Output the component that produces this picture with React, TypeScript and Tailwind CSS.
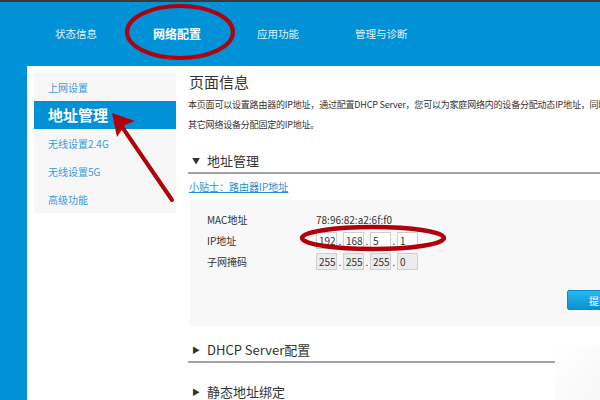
import React from "react";

const navItems = [
  { label: "状态信息", w: "w-[98px]", active: false },
  { label: "网络配置", w: "w-[104px]", active: true },
  { label: "应用功能", w: "w-[98px]", active: false },
  { label: "管理与诊断", w: "w-[98px]", active: false },
];

const sideItems = ["上网设置", "地址管理", "无线设置2.4G", "无线设置5G", "高级功能"];

function IpBoxes({ parts, disabled }: { parts: string[]; disabled?: boolean }) {
  return (
    <div className="flex items-center">
      {parts.map((p, i) => (
        <div key={i} className="flex items-center">
          {i > 0 && <span className="w-[6px] text-center text-[10px] leading-none text-[#333]">.</span>}
          <div
            className={
              "w-[21px] h-[17px] border border-[#cfcfcf] text-[10px] leading-[15px] pl-[2px] text-[#333] " +
              (disabled ? "bg-[#ececec]" : "bg-white")
            }
          >
            {p}
          </div>
        </div>
      ))}
    </div>
  );
}

function Section({ title, open, w }: { title: string; open?: boolean; w: string }) {
  return (
    <div className={"flex items-center h-[20px] border-b-2 border-[#a3a3a3] box-content pb-[1px] " + w}>
      <span className="ml-[4px] w-[15px] text-[8px] text-[#333]">{open ? "▼" : "▶"}</span>
      <span className="text-[13px] text-[#333]">{title}</span>
    </div>
  );
}

export default function App() {
  return (
    <div
      className="relative w-[600px] h-[400px] overflow-hidden bg-[#0091d7]"
      style={{ fontFamily: '"Noto Sans CJK SC", "Liberation Sans", sans-serif' }}
    >
      <div className="h-[2px] bg-[#3a3a3a]" />
      <nav className="h-[64px] flex items-center pl-[55px]">
        {navItems.map((n) => (
          <div
            key={n.label}
            className={
              n.w +
              " " +
              (n.active ? "text-[12px] font-bold text-white" : "text-[10.5px] text-[#e3f1fb]")
            }
          >
            {n.label}
          </div>
        ))}
      </nav>

      <div className="flex pl-[27px] h-[334px]">
        <div className="flex-1 bg-white flex overflow-hidden">
          <aside className="ml-[7px] mt-[7px] w-[142px] h-[140px] bg-[#f7f7f7] flex flex-col shrink-0">
            {sideItems.map((s, i) =>
              i === 1 ? (
                <div key={s} className="h-[28px] bg-[#0091d7] flex items-center pl-[14px] text-[15px] font-bold text-white">
                  {s}
                </div>
              ) : (
                <div key={s} className="h-[28px] flex items-center pl-[14px] text-[10px] text-[#3a9ad9]">
                  {s}
                </div>
              )
            )}
          </aside>

          <main className="ml-[12px] w-[480px] shrink-0 pt-[6px] text-[#333]">
            <h1 className="h-[20px] leading-[20px] text-[15px] pl-[1px]">页面信息</h1>
            <div className="mt-[3px] text-[9px] tracking-[-0.2px] leading-[20px] whitespace-nowrap">
              <p>本页面可以设置路由器的IP地址，通过配置DHCP Server，您可以为家庭网络内的设备分配动态IP地址，同时为</p>
              <p>其它网络设备分配固定的IP地址。</p>
            </div>

            <div className="mt-[16px]">
              <Section title="地址管理" open w="w-[480px]" />
            </div>

            <div className="mt-[6px] h-[14px] leading-[14px] text-[10px] text-[#2a8fd0] underline pl-[1px]">
              小贴士：路由器IP地址
            </div>

            <div className="mt-[6px] ml-[2px] h-[126px] bg-[#f8f8f8] pt-[9px] pl-[17px]">
              <div className="flex items-center h-[21px] text-[10px]">
                <span className="w-[109px]">MAC地址</span>
                <span>78:96:82:a2:6f:f0</span>
              </div>
              <div className="flex items-center h-[21px] text-[10px]">
                <span className="w-[109px]">IP地址</span>
                <IpBoxes parts={["192", "168", "5", "1"]} />
              </div>
              <div className="flex items-center h-[21px] text-[10px]">
                <span className="w-[109px]">子网掩码</span>
                <IpBoxes parts={["255", "255", "255", "0"]} disabled />
              </div>
              <div className="mt-[18px] ml-[360px] w-[64px] h-[20px] rounded-[2px] bg-gradient-to-b from-[#25b9ef] to-[#0892d2] border border-[#0a8bc9] text-white text-[10px] flex items-center justify-center">
                提交
              </div>
            </div>

            <div className="mt-[14px]">
              <Section title="DHCP Server配置" w="w-[367px]" />
            </div>
            <div className="mt-[19px]">
              <Section title="静态地址绑定" w="w-[367px]" />
            </div>
          </main>
        </div>
      </div>

      <div className="absolute left-[555px] top-[345px] w-[45px] h-[55px] bg-gradient-to-br from-white to-[#f7f7f7]" />

      <svg className="absolute inset-0 pointer-events-none" width="600" height="400" viewBox="0 0 600 400">
        <ellipse cx="180" cy="32" rx="53" ry="26" fill="none" stroke="#b1000c" strokeWidth="4" />
        <ellipse cx="373" cy="238" rx="71" ry="11" fill="none" stroke="#b1000c" strokeWidth="4.5" />
        <line x1="172" y1="200" x2="118" y2="121" stroke="#b1000c" strokeWidth="4" strokeLinecap="round" />
        <polygon points="112,113 135,121 125,125 117,137" fill="#b1000c" />
      </svg>
    </div>
  );
}
